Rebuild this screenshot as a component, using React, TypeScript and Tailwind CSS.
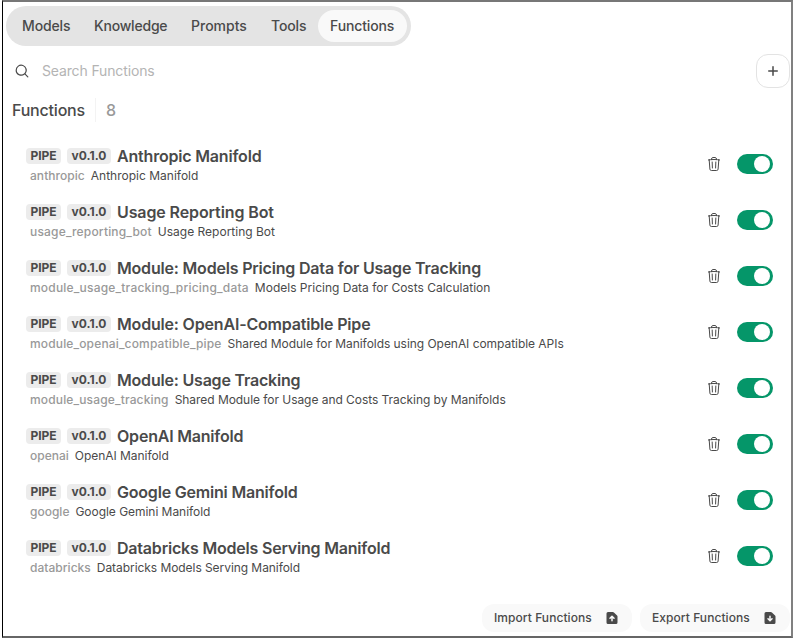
import React from "react";

const rows = [
  { title: "Anthropic Manifold", id: "anthropic", text: "Anthropic Manifold", t: "tracking-[-0.19px]", i: "tracking-[0.05px]", d: "" },
  { title: "Usage Reporting Bot", id: "usage_reporting_bot", text: "Usage Reporting Bot", t: "tracking-[-0.11px]", i: "tracking-[0.18px]", d: "" },
  { title: "Module: Models Pricing Data for Usage Tracking", id: "module_usage_tracking_pricing_data", text: "Models Pricing Data for Costs Calculation", t: "tracking-[-0.19px]", i: "tracking-[0.2px]", d: "" },
  { title: "Module: OpenAI-Compatible Pipe", id: "module_openai_compatible_pipe", text: "Shared Module for Manifolds using OpenAI compatible APIs", t: "tracking-[-0.18px]", i: "tracking-[0.15px]", d: "tracking-[-0.045px]" },
  { title: "Module: Usage Tracking", id: "module_usage_tracking", text: "Shared Module for Usage and Costs Tracking by Manifolds", t: "tracking-[-0.2px]", i: "tracking-[0.15px]", d: "tracking-[-0.05px]" },
  { title: "OpenAI Manifold", id: "openai", text: "OpenAI Manifold", t: "tracking-[-0.2px]", i: "", d: "tracking-[-0.04px]" },
  { title: "Google Gemini Manifold", id: "google", text: "Google Gemini Manifold", t: "tracking-[-0.2px]", i: "", d: "tracking-[-0.04px]" },
  { title: "Databricks Models Serving Manifold", id: "databricks", text: "Databricks Models Serving Manifold", t: "tracking-[-0.2px]", i: "tracking-[0.03px]", d: "tracking-[-0.06px]" },
];

function Trash() {
  return (
    <svg className="size-4" viewBox="0 0 24 24" fill="none" stroke="#4a4a4a" strokeWidth="1.5" strokeLinecap="round" strokeLinejoin="round">
      <path d="m14.74 9-.346 9m-4.788 0L9.26 9m9.968-3.21c.342.052.682.107 1.022.166m-1.022-.165L18.16 19.673a2.25 2.25 0 0 1-2.244 2.077H8.084a2.25 2.25 0 0 1-2.244-2.077L4.772 5.79m14.456 0a48.108 48.108 0 0 0-3.478-.397m-12 .562c.34-.059.68-.114 1.022-.165m0 0a48.11 48.11 0 0 1 3.478-.397m7.5 0v-.916c0-1.18-.91-2.164-2.09-2.201a51.964 51.964 0 0 0-3.32 0c-1.18.037-2.09 1.022-2.09 2.201v.916m7.5 0a48.667 48.667 0 0 0-7.5 0" />
    </svg>
  );
}

function FileArrow({ up }: { up?: boolean }) {
  return (
    <svg className="size-4" viewBox="0 0 16 16" fill="#4a4a4a">
      <path
        fillRule="evenodd"
        clipRule="evenodd"
        d={
          up
            ? "M4 2a1.5 1.5 0 0 0-1.5 1.5v9A1.5 1.5 0 0 0 4 14h8a1.5 1.5 0 0 0 1.5-1.5V6.621a1.5 1.5 0 0 0-.44-1.06L9.94 2.439A1.5 1.5 0 0 0 8.878 2H4Zm4 9.5a.75.75 0 0 1-.75-.75V8.06l-.72.72a.75.75 0 0 1-1.06-1.06l2-2a.75.75 0 0 1 1.06 0l2 2a.75.75 0 1 1-1.06 1.06l-.72-.72v2.69a.75.75 0 0 1-.75.75Z"
            : "M4 2a1.5 1.5 0 0 0-1.5 1.5v9A1.5 1.5 0 0 0 4 14h8a1.5 1.5 0 0 0 1.5-1.5V6.621a1.5 1.5 0 0 0-.44-1.06L9.94 2.439A1.5 1.5 0 0 0 8.878 2H4Zm4 3.5a.75.75 0 0 1 .75.75v2.69l.72-.72a.75.75 0 1 1 1.06 1.06l-2 2a.75.75 0 0 1-1.06 0l-2-2a.75.75 0 0 1 1.06-1.06l.72.72V6.25A.75.75 0 0 1 8 5.5Z"
        }
      />
    </svg>
  );
}

export default function App() {
  return (
    <div className="h-[639px] w-[794px] overflow-hidden bg-white pl-[2px] font-['Inter',sans-serif] text-[#4a4a4a]">
      <div className="flex h-[638px] w-[791px] flex-col border-y-2 border-r-2 border-l border-t-[#777] border-r-[#808080] border-b-[#666] border-l-black">
        <nav className="mt-1 ml-[3px] flex h-10 w-[405px] shrink-0 items-center rounded-full bg-[#e4e4e4] text-sm leading-5 font-medium tracking-[-0.13px] whitespace-nowrap">
          <span className="ml-4 w-[72px]">Models</span>
          <span className="w-[97px] tracking-[-0.2px]">Knowledge</span>
          <span className="w-20 tracking-normal">Prompts</span>
          <span className="w-[47px]">Tools</span>
          <span className="flex h-8 w-[89px] items-center rounded-full bg-[#f9f9f9] pl-3">Functions</span>
        </nav>
        <div className="mt-2 flex h-[34px] shrink-0 items-center pl-[11px]">
          <svg className="size-4" viewBox="0 0 20 20" fill="#4a4a4a">
            <path fillRule="evenodd" clipRule="evenodd" d="M9 3.5a5.5 5.5 0 100 11 5.5 5.5 0 000-11zM2 9a7 7 0 1112.452 4.391l3.328 3.329a.75.75 0 11-1.06 1.06l-3.329-3.328A7 7 0 012 9z" />
          </svg>
          <span className="ml-3 text-sm tracking-[-0.14px] text-[#b4b4b4]">Search Functions</span>
          <button className="mr-[1px] ml-auto flex size-[34px] items-center justify-center rounded-xl border border-[#e3e3e3]">
            <svg className="size-4" viewBox="0 0 16 16" fill="#4a4a4a">
              <path d="M8.75 3.75a.75.75 0 0 0-1.5 0v3.5h-3.5a.75.75 0 0 0 0 1.5h3.5v3.5a.75.75 0 0 0 1.5 0v-3.5h3.5a.75.75 0 0 0 0-1.5h-3.5v-3.5Z" />
            </svg>
          </button>
        </div>
        <div className="mt-2 flex h-7 shrink-0 items-center pl-[9px] text-base font-medium">
          <span className="w-[83px] tracking-[-0.2px]">Functions</span>
          <span className="h-6 w-px bg-[#f3f3f3]" />
          <span className="ml-2.5 text-[#999]">8</span>
        </div>
        <div className="mt-3 flex flex-col">
          {rows.map((r) => (
            <div key={r.id} className="flex h-14 items-center pr-[18px] pl-[23px]">
              <div className="flex flex-1 flex-col whitespace-nowrap">
                <div className="flex h-6 items-center">
                  <span className="flex h-4 w-[35px] items-center justify-center rounded bg-[#ececec] text-xs font-bold">PIPE</span>
                  <span className="ml-1.5 flex h-4 w-11 items-center justify-center rounded bg-[#ececec] text-xs font-bold">v0.1.0</span>
                  <span className={`ml-1.5 text-base leading-6 font-semibold ${r.t}`}>{r.title}</span>
                </div>
                <div className="flex h-4 items-center gap-1.5 pl-1 text-xs leading-4">
                  <span className={`font-medium text-[#999] ${r.i}`}>{r.id}</span>
                  <span className={r.d}>{r.text}</span>
                </div>
              </div>
              <Trash />
              <span className="ml-[15px] flex h-5 w-9 items-center justify-end rounded-full bg-[#059669] pr-[3px]">
                <span className="size-4 rounded-full bg-white" />
              </span>
            </div>
          ))}
        </div>
        <div className="mt-5 mr-[1px] flex h-7 shrink-0 justify-end gap-2 text-xs font-medium tracking-[0.06px]">
          <button className="flex w-[150px] items-center justify-between rounded-xl bg-[#f9f9f9] pr-3 pl-3">Import Functions<FileArrow up /></button>
          <button className="flex w-[150px] items-center justify-between rounded-xl bg-[#f9f9f9] pr-3 pl-3">Export Functions<FileArrow /></button>
        </div>
      </div>
    </div>
  );
}
